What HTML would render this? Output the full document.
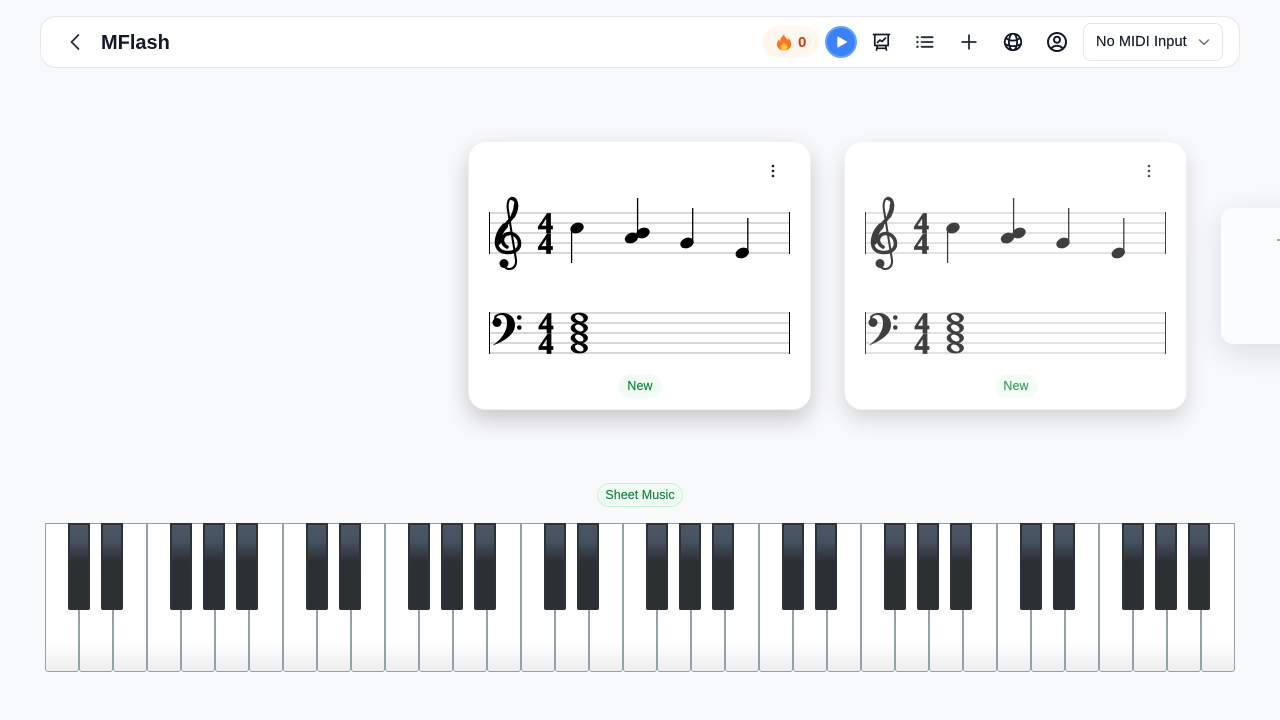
<!DOCTYPE html>
<html lang="en"><head><meta charset="utf-8"><title>MFlash</title>
<style>
html,body{margin:0;padding:0;width:1280px;height:720px;overflow:hidden;background:#f8f9fb;font-family:"Liberation Sans",sans-serif;color:#111827}
*{box-sizing:border-box}
.abs,.hdr,.card,.chip,.w,.b{position:absolute}
.hdr{left:40px;top:16px;width:1200px;height:52px;background:#fff;border:1px solid #e5e7eb;border-radius:16px}
.title{position:absolute;left:101px;top:31px;font-size:20px;line-height:24px;font-weight:700;color:#111827}
.pill{position:absolute;left:763px;top:26px;width:56px;height:32px;border-radius:16px;background:#fff7ed}
.zero{position:absolute;left:798px;top:34px;font-size:15px;line-height:18px;font-weight:700;color:#c2410c}
.play{position:absolute;left:825px;top:26px;width:32px;height:32px;border-radius:50%;background:#3b82f6;border:2px solid #60a5fa}
.sel{position:absolute;left:1083px;top:23px;width:140px;height:38px;border:1px solid #e5e7eb;border-radius:8px;background:#fff}
.sel span{position:absolute;left:12px;top:9px;font-size:14.5px;line-height:18px;letter-spacing:.1px;color:#111827;white-space:nowrap;-webkit-text-stroke:.15px #111827}
svg.ic{position:absolute;fill:none;stroke-linecap:round;stroke-linejoin:round}
.card{width:343px;height:269px;top:141px;background:#fff;border-radius:18px}
.card svg{position:absolute;left:0;top:0}
.c1{left:468px;border:1px solid #f0f1f3;box-shadow:0 10px 24px rgba(0,0,0,.2);z-index:3}
.c2{left:844px;border:1px solid #f0f1f3;box-shadow:0 10px 22px rgba(0,0,0,.14);z-index:2}
.c3{left:1221px;top:208px;width:172px;height:136px;background:#fbfcfd;border-radius:12px;box-shadow:0 8px 32px rgba(0,0,0,.12);z-index:1}
.chip{font-size:12.5px;line-height:24px;letter-spacing:.05px;text-align:center;border-radius:12px;height:24px;background:#f0fdf4;color:#15803d;white-space:nowrap;-webkit-text-stroke:.15px #15803d}
.w{top:523px;width:34px;height:149px;border:1px solid #95a1a9;border-radius:0 0 3px 3px;background:linear-gradient(to bottom,#fff 0,#fff 80%,#eeeeee 100%)}
.b{top:523px;width:22px;height:87px;border:2px solid #2d3238;border-radius:0 0 2px 2px;background:linear-gradient(to bottom,#4a5663 0,#465260 20%,#2b3033 44%,#2b3033 100%);z-index:2}
</style></head><body>

<div class="hdr"></div>
<svg class="ic" style="left:63px;top:30px;stroke:#1f2937;stroke-width:1.7" width="24" height="24" viewBox="0 0 24 24"><path d="M15.5 5 8.5 12l7 7"/></svg>
<div class="title">MFlash</div>
<div class="pill"></div>
<svg class="abs" style="left:776px;top:34px" width="16" height="17" viewBox="0 0 16 17"><path fill="#f4792b" d="M8 0.5C8.6 3 11 4.2 12 6c.4-.7.5-1.3.5-2 1.7 1.700 2.800 4 2.800 6.300C15.300 14 12 16.500 8 16.500S.8 14 .8 10.300C.8 8 2 6.500 3 5.300c.2 1 .6 1.700 1.200 2.200C4 4.800 5.800 2.300 8 .5z"/><path fill="#fdc33f" d="M8 8c.4 1.400 3.300 2.800 3.300 5.200 0 2-1.500 3.300-3.300 3.300s-3.300-1.300-3.300-3.300C4.700 11.200 7.300 10 8 8z"/></svg>
<div class="zero">0</div>
<div class="play"><svg class="abs" style="left:9px;top:8px" width="12" height="12" viewBox="0 0 14 14"><path fill="#fff" d="M1.500 1.300c0-.6.600-.9 1.100-.6l10 5.700c.5.300.5.900 0 1.200l-10 5.700c-.5.300-1.100 0-1.100-.6z"/></svg></div>
<svg class="ic" style="left:871px;top:32px;stroke:#111827;stroke-width:1.700" width="20" height="20" viewBox="0 0 20 20"><path d="M2.500 2.500H18.500M3.800 2.500V13.500H17.200V2.500M6.500 13.500L5.500 18M14.500 13.500L15.500 18M5.800 16.300H15.200M6.500 10.500L9 8L11 9.500L14.500 6"/></svg>
<svg class="ic" style="left:914px;top:31px;stroke:#1f2937;stroke-width:2" width="22" height="22" viewBox="0 0 24 24"><path d="M8.250 6.750h12M8.250 12h12m-12 5.250h12"/><path stroke-width="2.600" d="M3.750 6.750h.01M3.750 12h.01M3.750 17.250h.01"/></svg>
<svg class="ic" style="left:958px;top:31px;stroke:#1f2937;stroke-width:1.900" width="22" height="22" viewBox="0 0 24 24"><path d="M12 4.500v15m7.500-7.500h-15"/></svg>
<svg class="ic" style="left:1002px;top:31px;stroke:#111827;stroke-width:2" width="22" height="22" viewBox="0 0 24 24"><path d="M12 21a9.004 9.004 0 008.716-6.747M12 21a9.004 9.004 0 01-8.716-6.747M12 21c2.485 0 4.500-4.030 4.500-9S14.485 3 12 3m0 18c-2.485 0-4.500-4.030-4.500-9S9.515 3 12 3m0 0a8.997 8.997 0 017.843 4.582M12 3a8.997 8.997 0 00-7.843 4.582m15.686 0A11.953 11.953 0 0112 10.500c-2.998 0-5.740-1.100-7.843-2.918m15.686 0A8.959 8.959 0 0121 12c0 .778-.099 1.533-.284 2.253m0 0A17.919 17.919 0 0112 16.500c-3.162 0-6.133-.815-8.716-2.247m0 0A9.004 9.004 0 013 12c0-1.605.42-3.113 1.157-4.418"/></svg>
<svg class="ic" style="left:1045px;top:30px;stroke:#111827;stroke-width:2" width="24" height="24" viewBox="0 0 24 24"><path d="M17.982 18.725A7.488 7.488 0 0012 15.750a7.488 7.488 0 00-5.982 2.975m11.963 0a9 9 0 10-11.963 0m11.963 0A8.966 8.966 0 0112 21a8.966 8.966 0 01-5.982-2.275M15 9.750a3 3 0 11-6 0 3 3 0 016 0z"/></svg>
<div class="sel"><span>No MIDI Input</span><svg class="ic" style="left:113px;top:11px;stroke:#6b7280;stroke-width:1.500" width="14" height="14" viewBox="0 0 14 14"><path d="M2.500 5 7 9.300l4.500-4.300"/></svg></div>

<div class="card c1">
<svg width="343" height="270" viewBox="469 142 343 270">
<g stroke="#cccccc" stroke-width="1.500"><path d="M489 213H790M489 223H790M489 233H790M489 243H790M489 253H790M489 313H790M489 323H790M489 333H790M489 343H790M489 353H790"/></g>
<g stroke="#000" stroke-width="1"><path d="M489.500 212V254M789.500 212V254M489.500 312V354M789.500 312V354"/></g>
<circle cx="773" cy="166" r="1.300" fill="#111827"/><circle cx="773" cy="171" r="1.300" fill="#111827"/><circle cx="773" cy="176" r="1.300" fill="#111827"/>
<g fill="none" stroke="#000" stroke-linecap="round">
<path stroke-width="2.100" d="M504 265C505 271 517 271 516 260L507.800 209C507 202 509 198 512 198"/>
<path stroke-width="3.600" d="M512 198.500C518 199 517.500 210 513 216C508 224 496.500 231 496.500 242C496.500 249 501 252.500 508 252.500C515 252.500 519.800 249 519.500 243C519 237 514 233.500 510 233.500C505 233.500 502 237 502.500 241C503 244 505 246 507 247"/>
<path stroke-width="6" d="M505 226C500 231 498 236 498 242"/>
<path stroke-width="4.500" d="M516 205C516 209 515 212 513 216"/>
</g>
<circle cx="504" cy="263.500" r="4.500"/>
<g font-family="'Liberation Serif',serif" font-weight="700" font-size="30" text-anchor="middle" stroke="#000" stroke-width=".8">
<text x="545.500" y="232.800">4</text><text x="545.500" y="253.600">4</text><text x="546" y="332.800">4</text><text x="546" y="353.600">4</text></g>
<g stroke="#000" stroke-width="1.300"><path d="M571.600 228V263M637.600 198V233M692.700 208V243M747.800 218V253"/></g>
<g><ellipse cx="577" cy="228" rx="6.900" ry="5.100" transform="rotate(-22 577 228)"/><ellipse cx="631.500" cy="238" rx="6.900" ry="5.100" transform="rotate(-22 631.500 238)"/><ellipse cx="643" cy="233" rx="6.900" ry="5.100" transform="rotate(-22 643 233)"/><ellipse cx="687" cy="243" rx="6.900" ry="5.100" transform="rotate(-22 687 243)"/><ellipse cx="742.300" cy="253" rx="6.900" ry="5.100" transform="rotate(-22 742.300 253)"/></g>
<path d="M492.500 345.500C502 339 507 331 507 323C507 318 505 315 501 315C498 315 496 317 495.500 320C493.500 320 494 316 495 315.500C497 313.800 500 313 503 313C510 313 515 318 515 325C515 334 505 341 492.500 345.500Z"/>
<circle cx="497" cy="322.500" r="4.500"/><circle cx="519.300" cy="317.500" r="2.300"/><circle cx="519.300" cy="327.500" r="2.300"/>
<g><ellipse cx="579.300" cy="318" rx="8.600" ry="5.400"/><ellipse cx="579.300" cy="328" rx="8.600" ry="5.400"/><ellipse cx="579.300" cy="338" rx="8.600" ry="5.400"/><ellipse cx="579.300" cy="348" rx="8.600" ry="5.400"/></g>
<g fill="#fff"><ellipse cx="579.300" cy="318" rx="4.600" ry="3.100" transform="rotate(30 579.300 318)"/><ellipse cx="579.300" cy="328" rx="4.600" ry="3.100" transform="rotate(30 579.300 328)"/><ellipse cx="579.300" cy="338" rx="4.600" ry="3.100" transform="rotate(30 579.300 338)"/><ellipse cx="579.300" cy="348" rx="4.600" ry="3.100" transform="rotate(30 579.300 348)"/></g>
</svg>
<div class="chip" style="left:150px;top:232px;width:42px">New</div>
</div>

<div class="card c2">
<svg width="343" height="270" viewBox="469 142 343 270" opacity=".75">
<g stroke="#cccccc" stroke-width="1.500"><path d="M489 213H790M489 223H790M489 233H790M489 243H790M489 253H790M489 313H790M489 323H790M489 333H790M489 343H790M489 353H790"/></g>
<g stroke="#000" stroke-width="1"><path d="M489.500 212V254M789.500 212V254M489.500 312V354M789.500 312V354"/></g>
<circle cx="773" cy="166" r="1.300" fill="#111827"/><circle cx="773" cy="171" r="1.300" fill="#111827"/><circle cx="773" cy="176" r="1.300" fill="#111827"/>
<g fill="none" stroke="#000" stroke-linecap="round">
<path stroke-width="2.100" d="M504 265C505 271 517 271 516 260L507.800 209C507 202 509 198 512 198"/>
<path stroke-width="3.600" d="M512 198.500C518 199 517.500 210 513 216C508 224 496.500 231 496.500 242C496.500 249 501 252.500 508 252.500C515 252.500 519.800 249 519.500 243C519 237 514 233.500 510 233.500C505 233.500 502 237 502.500 241C503 244 505 246 507 247"/>
<path stroke-width="6" d="M505 226C500 231 498 236 498 242"/>
<path stroke-width="4.500" d="M516 205C516 209 515 212 513 216"/>
</g>
<circle cx="504" cy="263.500" r="4.500"/>
<g font-family="'Liberation Serif',serif" font-weight="700" font-size="30" text-anchor="middle" stroke="#000" stroke-width=".8">
<text x="545.500" y="232.800">4</text><text x="545.500" y="253.600">4</text><text x="546" y="332.800">4</text><text x="546" y="353.600">4</text></g>
<g stroke="#000" stroke-width="1.300"><path d="M571.600 228V263M637.600 198V233M692.700 208V243M747.800 218V253"/></g>
<g><ellipse cx="577" cy="228" rx="6.900" ry="5.100" transform="rotate(-22 577 228)"/><ellipse cx="631.500" cy="238" rx="6.900" ry="5.100" transform="rotate(-22 631.500 238)"/><ellipse cx="643" cy="233" rx="6.900" ry="5.100" transform="rotate(-22 643 233)"/><ellipse cx="687" cy="243" rx="6.900" ry="5.100" transform="rotate(-22 687 243)"/><ellipse cx="742.300" cy="253" rx="6.900" ry="5.100" transform="rotate(-22 742.300 253)"/></g>
<path d="M492.500 345.500C502 339 507 331 507 323C507 318 505 315 501 315C498 315 496 317 495.500 320C493.500 320 494 316 495 315.500C497 313.800 500 313 503 313C510 313 515 318 515 325C515 334 505 341 492.500 345.500Z"/>
<circle cx="497" cy="322.500" r="4.500"/><circle cx="519.300" cy="317.500" r="2.300"/><circle cx="519.300" cy="327.500" r="2.300"/>
<g><ellipse cx="579.300" cy="318" rx="8.600" ry="5.400"/><ellipse cx="579.300" cy="328" rx="8.600" ry="5.400"/><ellipse cx="579.300" cy="338" rx="8.600" ry="5.400"/><ellipse cx="579.300" cy="348" rx="8.600" ry="5.400"/></g>
<g fill="#fff"><ellipse cx="579.300" cy="318" rx="4.600" ry="3.100" transform="rotate(30 579.300 318)"/><ellipse cx="579.300" cy="328" rx="4.600" ry="3.100" transform="rotate(30 579.300 328)"/><ellipse cx="579.300" cy="338" rx="4.600" ry="3.100" transform="rotate(30 579.300 338)"/><ellipse cx="579.300" cy="348" rx="4.600" ry="3.100" transform="rotate(30 579.300 348)"/></g>
</svg>
<div class="chip" style="left:150px;top:232px;width:42px;opacity:.8">New</div>
</div>

<div class="card c3"><div class="abs" style="left:56px;top:31px;width:4px;height:2px;background:#a0a4a9"></div></div>

<div class="chip" style="left:597px;top:483px;width:86px;border:1px solid #bbf7d0;line-height:22px;z-index:4">Sheet Music</div>

<div class="w" style="left:45px"></div><div class="w" style="left:79px"></div><div class="w" style="left:113px"></div><div class="w" style="left:147px"></div><div class="w" style="left:181px"></div><div class="w" style="left:215px"></div><div class="w" style="left:249px"></div>
<div class="w" style="left:283px"></div><div class="w" style="left:317px"></div><div class="w" style="left:351px"></div><div class="w" style="left:385px"></div><div class="w" style="left:419px"></div><div class="w" style="left:453px"></div><div class="w" style="left:487px"></div>
<div class="w" style="left:521px"></div><div class="w" style="left:555px"></div><div class="w" style="left:589px"></div><div class="w" style="left:623px"></div><div class="w" style="left:657px"></div><div class="w" style="left:691px"></div><div class="w" style="left:725px"></div>
<div class="w" style="left:759px"></div><div class="w" style="left:793px"></div><div class="w" style="left:827px"></div><div class="w" style="left:861px"></div><div class="w" style="left:895px"></div><div class="w" style="left:929px"></div><div class="w" style="left:963px"></div>
<div class="w" style="left:997px"></div><div class="w" style="left:1031px"></div><div class="w" style="left:1065px"></div><div class="w" style="left:1099px"></div><div class="w" style="left:1133px"></div><div class="w" style="left:1167px"></div><div class="w" style="left:1201px"></div>

<div class="b" style="left:68px"></div><div class="b" style="left:101px"></div><div class="b" style="left:170px"></div><div class="b" style="left:203px"></div><div class="b" style="left:236px"></div>
<div class="b" style="left:306px"></div><div class="b" style="left:339px"></div><div class="b" style="left:408px"></div><div class="b" style="left:441px"></div><div class="b" style="left:474px"></div>
<div class="b" style="left:544px"></div><div class="b" style="left:577px"></div><div class="b" style="left:646px"></div><div class="b" style="left:679px"></div><div class="b" style="left:712px"></div>
<div class="b" style="left:782px"></div><div class="b" style="left:815px"></div><div class="b" style="left:884px"></div><div class="b" style="left:917px"></div><div class="b" style="left:950px"></div>
<div class="b" style="left:1020px"></div><div class="b" style="left:1053px"></div><div class="b" style="left:1122px"></div><div class="b" style="left:1155px"></div><div class="b" style="left:1188px"></div>
</body></html>
